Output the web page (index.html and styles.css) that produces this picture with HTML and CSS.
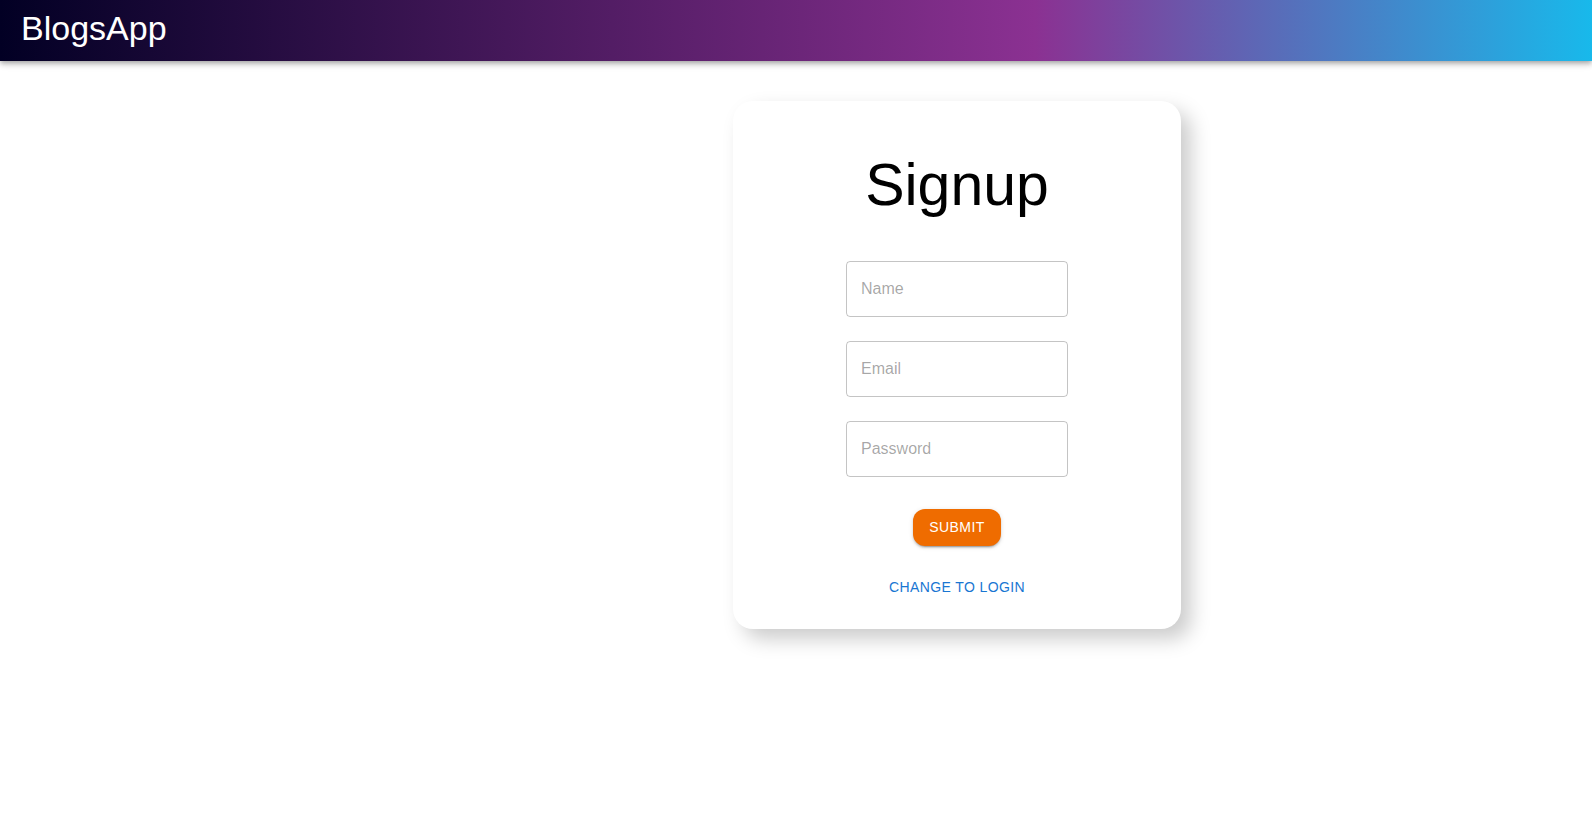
FILE: index.html
```html
<!DOCTYPE html>
<html lang="en">
<head>
<meta charset="utf-8">
<title>BlogsApp</title>
<link rel="stylesheet" href="styles.css">
</head>
<body>
<header class="appbar">
  <div class="toolbar">
    <h4 class="brand">BlogsApp</h4>
  </div>
</header>
<main class="page">
  <form class="card">
    <h2 class="title">Signup</h2>
    <div class="field"><input class="input" type="text" placeholder="Name"></div>
    <div class="field"><input class="input" type="email" placeholder="Email"></div>
    <div class="field"><input class="input" type="password" placeholder="Password"></div>
    <button type="button" class="btn-submit">Submit</button>
    <button type="button" class="btn-text">Change to Login</button>
  </form>
</main>
</body>
</html>
```

FILE: styles.css
```css
* { box-sizing: border-box; }
html, body { margin: 0; padding: 0; }
body {
  background: #ffffff;
  font-family: "Liberation Sans", Arial, Helvetica, sans-serif;
  color: rgba(0,0,0,0.87);
  min-height: 833px;
}
.appbar {
  height: 61px;
  background: linear-gradient(90deg, rgb(2,0,36) 0%, rgb(139,49,146) 65%, rgb(24,185,235) 100%);
  box-shadow: 0px 2px 4px -1px rgba(0,0,0,0.2), 0px 4px 5px 0px rgba(0,0,0,0.14), 0px 1px 10px 0px rgba(0,0,0,0.12);
  position: relative;
  z-index: 2;
}
.toolbar {
  display: flex;
  align-items: flex-start;
  height: 100%;
  padding: 7px 21px 0;
}
.brand {
  margin: 0;
  font-size: 34px;
  font-weight: 400;
  line-height: 42px;
  color: #ffffff;
}
.page {
  padding: 40px 0 80px 733px;
}
.card {
  width: 448px;
  padding: 24px;
  display: flex;
  flex-direction: column;
  align-items: center;
  border-radius: 20px;
  box-shadow: 10px 10px 20px #ccc;
  background: #fff;
}
.title {
  margin: 0;
  padding: 24px;
  font-size: 59px;
  font-weight: 400;
  line-height: 72px;
  color: #000;
  text-align: center;
}
.field {
  margin: 16px 0 8px;
  width: 222px;
}
.input {
  display: block;
  width: 100%;
  height: 56px;
  padding: 16.5px 14px;
  border: 1px solid rgba(0,0,0,0.23);
  border-radius: 4px;
  font-family: "Liberation Sans", Arial, sans-serif;
  font-size: 16px;
  color: rgba(0,0,0,0.87);
  background: transparent;
  outline: none;
}
.input::placeholder { color: rgba(0,0,0,0.36); opacity: 1; }
.btn-submit {
  margin-top: 24px;
  height: 36.5px;
  padding: 6px 16px;
  border: 0;
  border-radius: 12px;
  background: #ef6c00;
  color: #fff;
  font-family: "Liberation Sans", Arial, sans-serif;
  font-size: 14px;
  font-weight: 500;
  line-height: 24.5px;
  letter-spacing: 0.4px;
  text-transform: uppercase;
  box-shadow: 0px 3px 1px -2px rgba(0,0,0,0.2), 0px 2px 2px 0px rgba(0,0,0,0.14), 0px 1px 5px 0px rgba(0,0,0,0.12);
  cursor: pointer;
}
.btn-text {
  margin-top: 23px;
  height: 36.5px;
  padding: 6px 8px;
  border: 0;
  background: transparent;
  color: #1976d2;
  font-family: "Liberation Sans", Arial, sans-serif;
  font-size: 14px;
  font-weight: 500;
  line-height: 24.5px;
  letter-spacing: 0.4px;
  text-transform: uppercase;
  cursor: pointer;
}
```
